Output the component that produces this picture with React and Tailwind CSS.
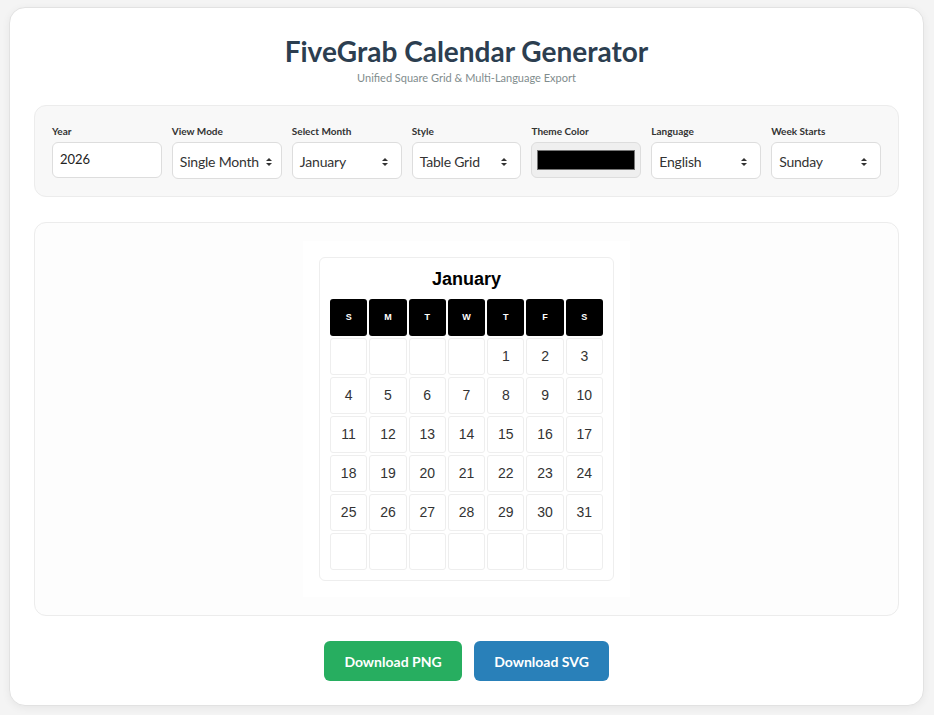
import { useState } from "react";

const MONTHS = ["January","February","March","April","May","June","July","August","September","October","November","December"];
const DAYS = ["S","M","T","W","T","F","S"];

function Arrows() {
  return (
    <svg width="8" height="10" viewBox="0 0 8 10" className="shrink-0">
      <path d="M4 1 L7 4 H1 Z" fill="#333" />
      <path d="M4 9 L7 6 H1 Z" fill="#333" />
    </svg>
  );
}

function Field({ label, children }) {
  return (
    <div className="flex w-[110px] flex-col">
      <label className="mb-[5px] text-[10px] font-bold leading-[12px] text-[#333]">{label}</label>
      {children}
    </div>
  );
}

function FakeSelect({ value }) {
  return (
    <div className="flex h-[37px] items-center justify-between gap-[6px] whitespace-nowrap rounded-[6px] border border-[#ddd] bg-white pl-[7px] pr-[12px] pt-[2px] text-[14px] text-[#333]">
      <span className="tracking-[-0.2px]">{value}</span>
      <Arrows />
    </div>
  );
}

export default function App() {
  const [year] = useState(2026);
  const month = 0;
  const first = new Date(year, month, 1).getDay();
  const count = new Date(year, month + 1, 0).getDate();
  const cells = Array.from({ length: 42 }, (_, i) => {
    const d = i - first + 1;
    return d >= 1 && d <= count ? d : null;
  });

  return (
    <div className="min-h-[715px] bg-[#f4f4f4] pl-[9px] pr-[10px] pt-[7px] pb-[9px] font-['Lato','Noto_Sans',sans-serif]">
      <div className="rounded-[16px] border border-[#e2e2e2] bg-white px-[24px] pb-[24px] pt-[26px] shadow-[0_2px_8px_rgba(0,0,0,0.06)]">
        <h1 className="text-center text-[28px] font-bold leading-[34px] text-[#2c3e50]">FiveGrab Calendar Generator</h1>
        <p className="mt-[3px] text-center text-[11px] leading-[14px] text-[#7f8c8d]">Unified Square Grid &amp; Multi-Language Export</p>

        <div className="mt-[20px] flex gap-[10px] rounded-[12px] border border-[#ececec] bg-[#f8f8f8] px-[17px] pb-[17px] pt-[19px]">
          <Field label="Year">
            <div className="flex h-[36px] items-center rounded-[6px] border border-[#ddd] bg-white px-[7px] text-[13px] text-[#222]">{year}</div>
          </Field>
          <Field label="View Mode"><FakeSelect value="Single Month" /></Field>
          <Field label="Select Month"><FakeSelect value="January" /></Field>
          <Field label="Style"><FakeSelect value="Table Grid" /></Field>
          <Field label="Theme Color">
            <div className="flex h-[36px] items-center rounded-[6px] border border-[#ddd] bg-[#efefef] px-[5px]">
              <div className="h-[20px] w-full border border-[#777] bg-black" />
            </div>
          </Field>
          <Field label="Language"><FakeSelect value="English" /></Field>
          <Field label="Week Starts"><FakeSelect value="Sunday" /></Field>
        </div>

        <div className="mt-[25px] flex justify-center rounded-[12px] border border-[#ececec] bg-[#fdfdfd] py-[18px]">
          <div className="bg-white p-[16px]">
            <div className="w-[295px] rounded-[6px] border border-[#eee] bg-white px-[10px] pb-[10px] pt-[10px] font-['Liberation_Sans',Arial,sans-serif]">
              <div className="text-center text-[18px] font-bold leading-[22px] text-black">{MONTHS[month]}</div>
              <div className="mt-[9px] grid grid-cols-7 gap-[2px]">
                {DAYS.map((d, i) => (
                  <div key={i} className="flex h-[37px] items-center justify-center rounded-[3px] bg-black text-[9px] font-bold text-white">{d}</div>
                ))}
              </div>
              <div className="mt-[2px] grid grid-cols-7 gap-[2px]">
                {cells.map((d, i) => (
                  <div key={i} className="flex h-[37px] items-center justify-center rounded-[3px] border border-[#eee] text-[14px] text-[#333]">{d}</div>
                ))}
              </div>
            </div>
          </div>
        </div>

        <div className="mt-[25px] flex justify-center gap-[12px]">
          <button className="h-[40px] w-[138px] rounded-[6px] bg-[#27ae60] text-[14px] font-bold text-white">Download PNG</button>
          <button className="h-[40px] w-[135px] rounded-[6px] bg-[#2980b9] text-[14px] font-bold text-white">Download SVG</button>
        </div>
      </div>
    </div>
  );
}
